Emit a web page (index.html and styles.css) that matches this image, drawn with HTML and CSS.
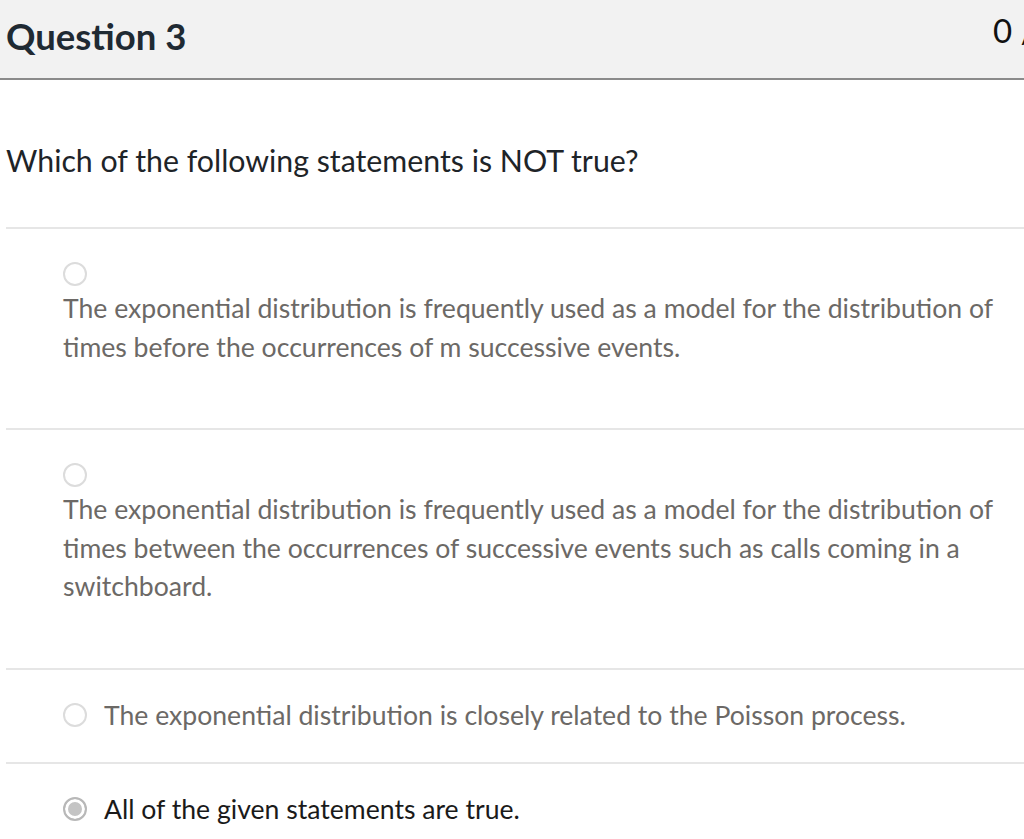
FILE: index.html
```html
<!DOCTYPE html>
<html lang="en">
<head>
<meta charset="utf-8">
<title>Question 3</title>
<link rel="stylesheet" href="styles.css">
</head>
<body>
<header class="q-header">
  <h2 class="q-title">Question 3</h2>
  <span class="q-points">0 / 1 pts</span>
</header>
<main class="q-body">
  <p class="q-text">Which of the following statements is NOT true?</p>
  <div class="answers">
    <div class="answer wrap">
      <span class="radio"></span>
      <div class="answer-label">The exponential distribution is frequently used as a model for the distribution of times before the occurrences of m successive events.</div>
    </div>
    <div class="answer wrap">
      <span class="radio"></span>
      <div class="answer-label">The exponential distribution is frequently used as a model for the distribution of times between the occurrences of successive events such as calls coming in a switchboard.</div>
    </div>
    <div class="answer inline">
      <span class="radio"></span>
      <div class="answer-label">The exponential distribution is closely related to the Poisson process.</div>
    </div>
    <div class="answer inline selected">
      <span class="radio"></span>
      <div class="answer-label">All of the given statements are true.</div>
    </div>
  </div>
</main>
</body>
</html>
```
FILE: styles.css
```css
html, body {
  margin: 0;
  padding: 0;
  background: #ffffff;
  overflow: hidden;
}

body {
  font-family: Lato, "Open Sans", "Liberation Sans", sans-serif;
}

.q-header {
  display: grid;
  grid-template-columns: 987px max-content;
  align-items: center;
  height: 78px;
  padding-left: 6px;
  background: #f2f2f2;
  border-bottom: 2px solid #8b8b8b;
  overflow: hidden;
  white-space: nowrap;
}

.q-title {
  margin: 0 0 6px;
  font-size: 36.5px;
  font-weight: 700;
  color: #1f2a33;
}

.q-points {
  margin-bottom: 18px;
  font-size: 33px;
  color: #111111;
}

.q-body {
  padding-left: 6px;
}

.q-text {
  margin: 0;
  padding: 61px 0 48px;
  font-size: 30.3px;
  line-height: 38px;
  color: #1e2428;
}

.answer {
  border-top: 2px solid #e6e6e6;
  padding: 26px 0 28px 57px;
  font-size: 26.6px;
  line-height: 38.5px;
  color: #6c6966;
}

.radio {
  flex: none;
  display: inline-block;
  width: 24px;
  height: 24px;
  box-sizing: border-box;
  border-radius: 50%;
  border: 2px solid #dcdcdc;
  background: #ffffff;
}

.answer.wrap {
  padding-bottom: 62px;
}

.answer.wrap .radio {
  display: block;
  margin: 7px 0 3px;
}

.answer.inline {
  display: flex;
  align-items: center;
  gap: 17px;
}

.answer.selected {
  color: #1a1a1a;
}

.answer.selected .radio {
  border-color: #b8b8b8;
  background: #c4c4c4;
  box-shadow: inset 0 0 0 3px #ffffff;
}
```
